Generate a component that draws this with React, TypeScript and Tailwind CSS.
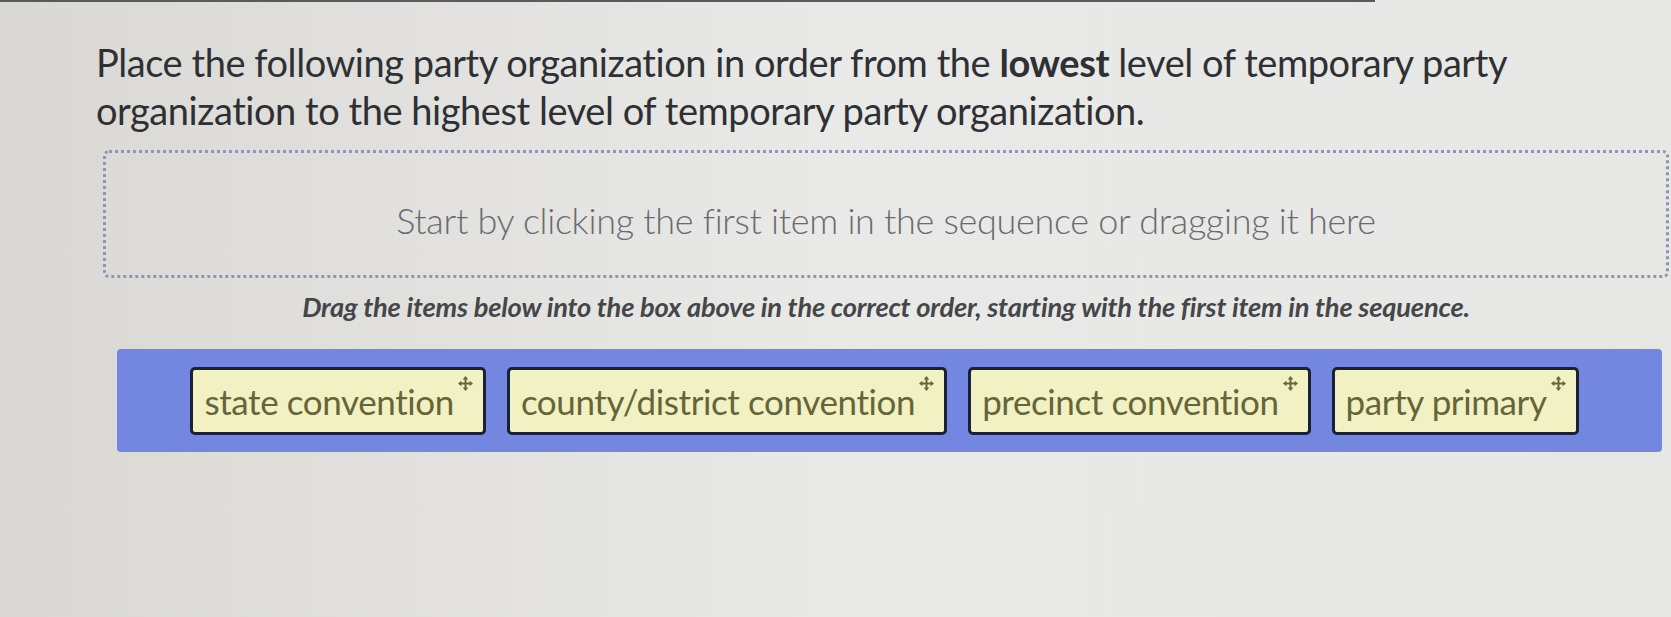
import React from "react";

const items = [
  "state convention",
  "county/district convention",
  "precinct convention",
  "party primary",
];

function MoveIcon() {
  return (
    <svg width="15" height="15" viewBox="0 0 14 14" className="shrink-0" fill="#66653a">
      <rect x="6.1" y="2" width="1.8" height="10" />
      <rect x="2" y="6.1" width="10" height="1.8" />
      <path d="M7 0 L9.6 3.2 L4.4 3.2 Z" />
      <path d="M7 14 L9.6 10.8 L4.4 10.8 Z" />
      <path d="M0 7 L3.2 4.4 L3.2 9.6 Z" />
      <path d="M14 7 L10.8 4.4 L10.8 9.6 Z" />
    </svg>
  );
}

function Tile({ label }: { label: string }) {
  return (
    <div className="flex items-start h-[68px] pl-[11px] pr-[10px] pt-[5px] bg-[#f1f1c3] border-[3px] border-[#1a2036] rounded-[5px]">
      <span className="self-center text-[35px] leading-none text-[#66653a] tracking-[-0.4px] pb-[4px]">
        {label}
      </span>
      <span className="ml-[4px] mt-[1px]">
        <MoveIcon />
      </span>
    </div>
  );
}

export default function App() {
  return (
    <div className="w-[1671px] h-[617px] overflow-hidden bg-gradient-to-r from-[#d9d8d5] via-[#e9e9e7] to-[#e7e7e5] font-['Lato',sans-serif]">
      <div className="h-[2px] w-[1375px] bg-[#5a5a5c]" />

      <div className="pl-[96px] pt-[36px] pr-[100px] text-[38px] leading-[48px] text-[#2f3033] tracking-[-0.45px]">
        Place the following party organization in order from the <b>lowest</b> level of temporary party
        organization to the highest level of temporary party organization.
      </div>

      <div className="ml-[103px] mt-[16px] w-[1566px] h-[128px] pt-[12px] border-[3px] border-dotted border-[#8f95b5] rounded-[6px] flex items-center justify-center">
        <span className="text-[36px] font-light text-[#6a6b6e] tracking-[-0.3px]">
          Start by clicking the first item in the sequence or dragging it here
        </span>
      </div>

      <div className="ml-[103px] w-[1566px] mt-[11px] text-center text-[27.3px] leading-[36px] font-bold italic text-[#45464a] tracking-[-0.2px]">
        Drag the items below into the box above in the correct order, starting with the first item in the sequence.
      </div>

      <div className="ml-[117px] mt-[24px] w-[1545px] h-[103px] bg-[#7487e0] rounded-[4px] flex items-center justify-center gap-[21px] pr-[10px]">
        {items.map((t) => (
          <Tile key={t} label={t} />
        ))}
      </div>
    </div>
  );
}
